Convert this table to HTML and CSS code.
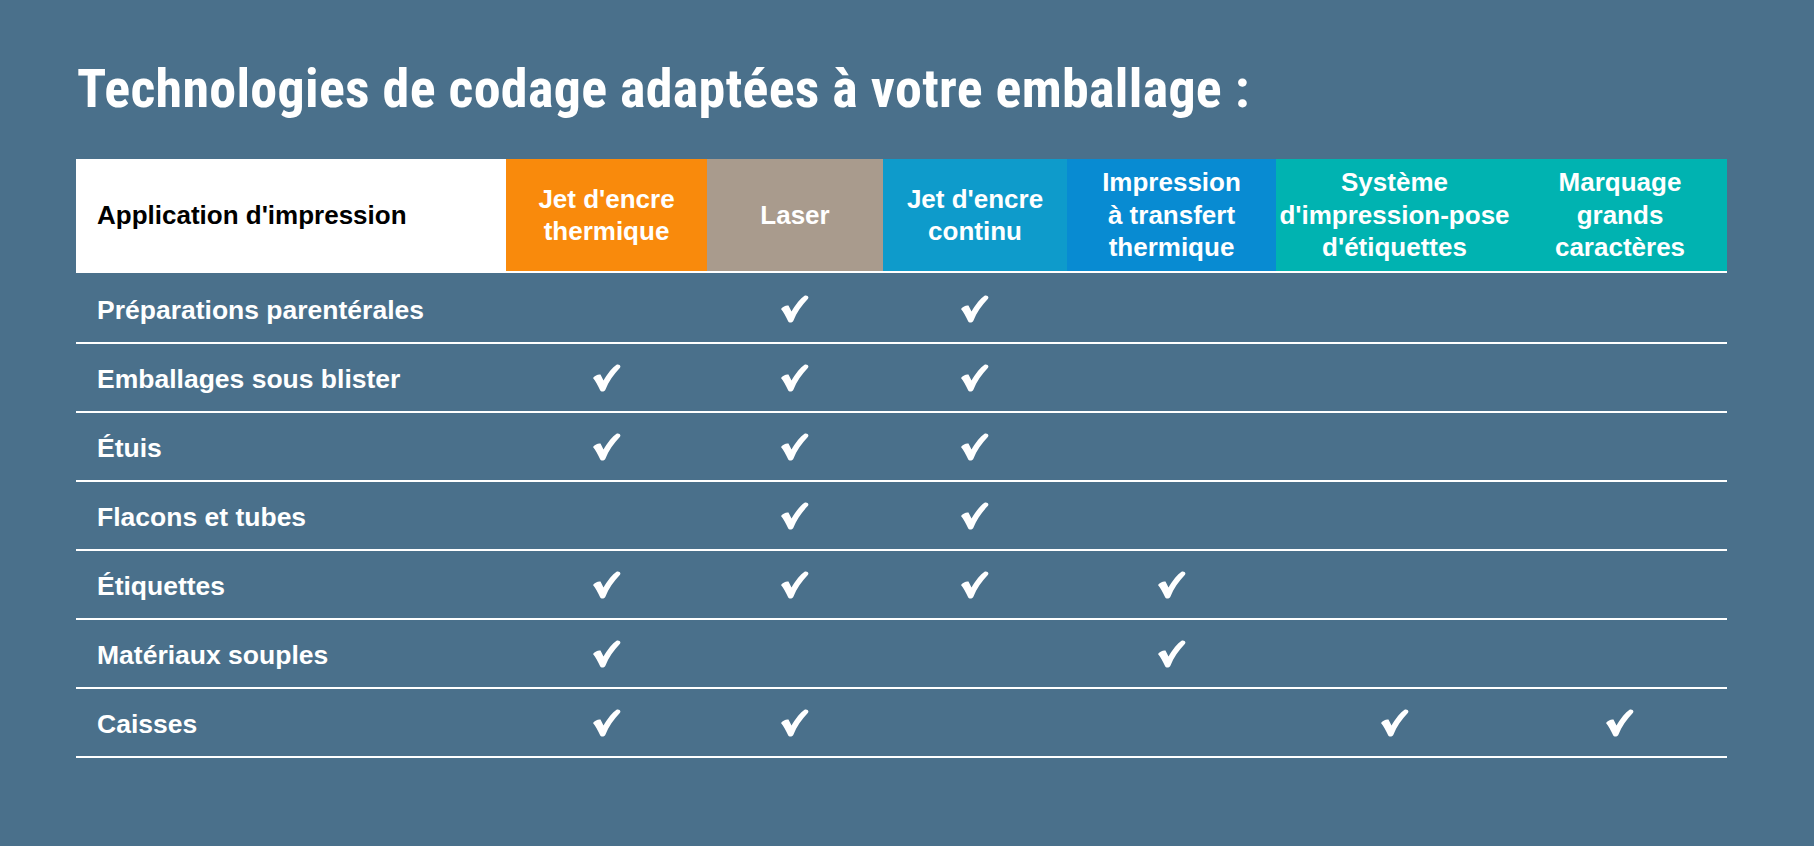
FILE: index.html
```html
<!DOCTYPE html>
<html lang="fr">
<head>
<meta charset="utf-8">
<title>Technologies de codage</title>
<link rel="stylesheet" href="styles.css">
</head>
<body>
<main class="page">
  <h1 class="title">Technologies de codage adaptées à votre emballage :</h1>
  <div class="grid">
    <div class="hcell hfirst">Application d'impression</div>
    <div class="hcell c-orange">Jet d'encre<br>thermique</div>
    <div class="hcell c-laser">Laser</div>
    <div class="hcell c-cij">Jet d'encre<br>continu</div>
    <div class="hcell c-tto">Impression<br>à transfert<br>thermique</div>
    <div class="hcell c-teal">Système<br>d'impression-pose<br>d'étiquettes</div>
    <div class="hcell c-teal">Marquage<br>grands<br>caractères</div>

    <div class="cell label">Préparations parentérales</div>
    <div class="cell"></div>
    <div class="cell"><svg class="chk" viewBox="0 0 28 28"><path d="M0 14 C2 11.5 5 10 7.5 10.5 L10.5 16.5 C15 9 19.5 3.5 23.5 0.8 C25.5 -0.3 28.5 1.5 27 3.8 C20.5 10.5 15.5 18 12.5 25.5 C11.5 28 8 28.3 7 26 C5 21.5 2.5 17 0 14 Z"/></svg></div>
    <div class="cell"><svg class="chk" viewBox="0 0 28 28"><path d="M0 14 C2 11.5 5 10 7.5 10.5 L10.5 16.5 C15 9 19.5 3.5 23.5 0.8 C25.5 -0.3 28.5 1.5 27 3.8 C20.5 10.5 15.5 18 12.5 25.5 C11.5 28 8 28.3 7 26 C5 21.5 2.5 17 0 14 Z"/></svg></div>
    <div class="cell"></div>
    <div class="cell"></div>
    <div class="cell"></div>

    <div class="cell label">Emballages sous blister</div>
    <div class="cell"><svg class="chk" viewBox="0 0 28 28"><path d="M0 14 C2 11.5 5 10 7.5 10.5 L10.5 16.5 C15 9 19.5 3.5 23.5 0.8 C25.5 -0.3 28.5 1.5 27 3.8 C20.5 10.5 15.5 18 12.5 25.5 C11.5 28 8 28.3 7 26 C5 21.5 2.5 17 0 14 Z"/></svg></div>
    <div class="cell"><svg class="chk" viewBox="0 0 28 28"><path d="M0 14 C2 11.5 5 10 7.5 10.5 L10.5 16.5 C15 9 19.5 3.5 23.5 0.8 C25.5 -0.3 28.5 1.5 27 3.8 C20.5 10.5 15.5 18 12.5 25.5 C11.5 28 8 28.3 7 26 C5 21.5 2.5 17 0 14 Z"/></svg></div>
    <div class="cell"><svg class="chk" viewBox="0 0 28 28"><path d="M0 14 C2 11.5 5 10 7.5 10.5 L10.5 16.5 C15 9 19.5 3.5 23.5 0.8 C25.5 -0.3 28.5 1.5 27 3.8 C20.5 10.5 15.5 18 12.5 25.5 C11.5 28 8 28.3 7 26 C5 21.5 2.5 17 0 14 Z"/></svg></div>
    <div class="cell"></div>
    <div class="cell"></div>
    <div class="cell"></div>

    <div class="cell label">Étuis</div>
    <div class="cell"><svg class="chk" viewBox="0 0 28 28"><path d="M0 14 C2 11.5 5 10 7.5 10.5 L10.5 16.5 C15 9 19.5 3.5 23.5 0.8 C25.5 -0.3 28.5 1.5 27 3.8 C20.5 10.5 15.5 18 12.5 25.5 C11.5 28 8 28.3 7 26 C5 21.5 2.5 17 0 14 Z"/></svg></div>
    <div class="cell"><svg class="chk" viewBox="0 0 28 28"><path d="M0 14 C2 11.5 5 10 7.5 10.5 L10.5 16.5 C15 9 19.5 3.5 23.5 0.8 C25.5 -0.3 28.5 1.5 27 3.8 C20.5 10.5 15.5 18 12.5 25.5 C11.5 28 8 28.3 7 26 C5 21.5 2.5 17 0 14 Z"/></svg></div>
    <div class="cell"><svg class="chk" viewBox="0 0 28 28"><path d="M0 14 C2 11.5 5 10 7.5 10.5 L10.5 16.5 C15 9 19.5 3.5 23.5 0.8 C25.5 -0.3 28.5 1.5 27 3.8 C20.5 10.5 15.5 18 12.5 25.5 C11.5 28 8 28.3 7 26 C5 21.5 2.5 17 0 14 Z"/></svg></div>
    <div class="cell"></div>
    <div class="cell"></div>
    <div class="cell"></div>

    <div class="cell label">Flacons et tubes</div>
    <div class="cell"></div>
    <div class="cell"><svg class="chk" viewBox="0 0 28 28"><path d="M0 14 C2 11.5 5 10 7.5 10.5 L10.5 16.5 C15 9 19.5 3.5 23.5 0.8 C25.5 -0.3 28.5 1.5 27 3.8 C20.5 10.5 15.5 18 12.5 25.5 C11.5 28 8 28.3 7 26 C5 21.5 2.5 17 0 14 Z"/></svg></div>
    <div class="cell"><svg class="chk" viewBox="0 0 28 28"><path d="M0 14 C2 11.5 5 10 7.5 10.5 L10.5 16.5 C15 9 19.5 3.5 23.5 0.8 C25.5 -0.3 28.5 1.5 27 3.8 C20.5 10.5 15.5 18 12.5 25.5 C11.5 28 8 28.3 7 26 C5 21.5 2.5 17 0 14 Z"/></svg></div>
    <div class="cell"></div>
    <div class="cell"></div>
    <div class="cell"></div>

    <div class="cell label">Étiquettes</div>
    <div class="cell"><svg class="chk" viewBox="0 0 28 28"><path d="M0 14 C2 11.5 5 10 7.5 10.5 L10.5 16.5 C15 9 19.5 3.5 23.5 0.8 C25.5 -0.3 28.5 1.5 27 3.8 C20.5 10.5 15.5 18 12.5 25.5 C11.5 28 8 28.3 7 26 C5 21.5 2.5 17 0 14 Z"/></svg></div>
    <div class="cell"><svg class="chk" viewBox="0 0 28 28"><path d="M0 14 C2 11.5 5 10 7.5 10.5 L10.5 16.5 C15 9 19.5 3.5 23.5 0.8 C25.5 -0.3 28.5 1.5 27 3.8 C20.5 10.5 15.5 18 12.5 25.5 C11.5 28 8 28.3 7 26 C5 21.5 2.5 17 0 14 Z"/></svg></div>
    <div class="cell"><svg class="chk" viewBox="0 0 28 28"><path d="M0 14 C2 11.5 5 10 7.5 10.5 L10.5 16.5 C15 9 19.5 3.5 23.5 0.8 C25.5 -0.3 28.5 1.5 27 3.8 C20.5 10.5 15.5 18 12.5 25.5 C11.5 28 8 28.3 7 26 C5 21.5 2.5 17 0 14 Z"/></svg></div>
    <div class="cell"><svg class="chk" viewBox="0 0 28 28"><path d="M0 14 C2 11.5 5 10 7.5 10.5 L10.5 16.5 C15 9 19.5 3.5 23.5 0.8 C25.5 -0.3 28.5 1.5 27 3.8 C20.5 10.5 15.5 18 12.5 25.5 C11.5 28 8 28.3 7 26 C5 21.5 2.5 17 0 14 Z"/></svg></div>
    <div class="cell"></div>
    <div class="cell"></div>

    <div class="cell label">Matériaux souples</div>
    <div class="cell"><svg class="chk" viewBox="0 0 28 28"><path d="M0 14 C2 11.5 5 10 7.5 10.5 L10.5 16.5 C15 9 19.5 3.5 23.5 0.8 C25.5 -0.3 28.5 1.5 27 3.8 C20.5 10.5 15.5 18 12.5 25.5 C11.5 28 8 28.3 7 26 C5 21.5 2.5 17 0 14 Z"/></svg></div>
    <div class="cell"></div>
    <div class="cell"></div>
    <div class="cell"><svg class="chk" viewBox="0 0 28 28"><path d="M0 14 C2 11.5 5 10 7.5 10.5 L10.5 16.5 C15 9 19.5 3.5 23.5 0.8 C25.5 -0.3 28.5 1.5 27 3.8 C20.5 10.5 15.5 18 12.5 25.5 C11.5 28 8 28.3 7 26 C5 21.5 2.5 17 0 14 Z"/></svg></div>
    <div class="cell"></div>
    <div class="cell"></div>

    <div class="cell label">Caisses</div>
    <div class="cell"><svg class="chk" viewBox="0 0 28 28"><path d="M0 14 C2 11.5 5 10 7.5 10.5 L10.5 16.5 C15 9 19.5 3.5 23.5 0.8 C25.5 -0.3 28.5 1.5 27 3.8 C20.5 10.5 15.5 18 12.5 25.5 C11.5 28 8 28.3 7 26 C5 21.5 2.5 17 0 14 Z"/></svg></div>
    <div class="cell"><svg class="chk" viewBox="0 0 28 28"><path d="M0 14 C2 11.5 5 10 7.5 10.5 L10.5 16.5 C15 9 19.5 3.5 23.5 0.8 C25.5 -0.3 28.5 1.5 27 3.8 C20.5 10.5 15.5 18 12.5 25.5 C11.5 28 8 28.3 7 26 C5 21.5 2.5 17 0 14 Z"/></svg></div>
    <div class="cell"></div>
    <div class="cell"></div>
    <div class="cell"><svg class="chk" viewBox="0 0 28 28"><path d="M0 14 C2 11.5 5 10 7.5 10.5 L10.5 16.5 C15 9 19.5 3.5 23.5 0.8 C25.5 -0.3 28.5 1.5 27 3.8 C20.5 10.5 15.5 18 12.5 25.5 C11.5 28 8 28.3 7 26 C5 21.5 2.5 17 0 14 Z"/></svg></div>
    <div class="cell"><svg class="chk" viewBox="0 0 28 28"><path d="M0 14 C2 11.5 5 10 7.5 10.5 L10.5 16.5 C15 9 19.5 3.5 23.5 0.8 C25.5 -0.3 28.5 1.5 27 3.8 C20.5 10.5 15.5 18 12.5 25.5 C11.5 28 8 28.3 7 26 C5 21.5 2.5 17 0 14 Z"/></svg></div>
  </div>
</main>
</body>
</html>
```

FILE: styles.css
```css
html, body {
  margin: 0;
  padding: 0;
}
body {
  background: #4a708b;
  width: 1814px;
  height: 846px;
  overflow: hidden;
  font-family: "Liberation Sans", Arial, sans-serif;
  font-weight: bold;
  color: #fff;
}
.page {
  padding: 57px 0 0 76px;
}
.title {
  margin: 0 0 0 1px;
  font-family: "Roboto", "Liberation Sans", sans-serif;
  font-size: 54px;
  line-height: 64px;
  font-weight: bold;
  font-stretch: 75%;
  letter-spacing: 0.3px;
  color: #fff;
  white-space: nowrap;
}
.grid {
  margin-top: 38px;
  display: grid;
  grid-template-columns: 430px 201px 176px 184px 209px 237px 214px;
  width: 1651px;
}
.hcell {
  box-sizing: border-box;
  height: 114px;
  margin-bottom: 2px;
  border-bottom: 2px solid #fff;
  display: flex;
  align-items: center;
  justify-content: center;
  text-align: center;
  font-size: 26px;
  line-height: 32.5px;
  color: #fff;
  white-space: nowrap;
}
.hfirst {
  background: #fff;
  color: #000;
  justify-content: flex-start;
  padding-left: 21px;
  text-align: left;
}
.c-orange { background: #f98a0c; }
.c-laser { background: #a99b8d; }
.c-cij { background: #0e9bcb; }
.c-tto { background: #088bd2; }
.c-teal { background: #00b3b1; }
.cell {
  box-sizing: border-box;
  height: 69px;
  border-bottom: 2px solid #fff;
  display: flex;
  align-items: center;
  justify-content: center;
}
.label {
  justify-content: flex-start;
  padding: 3px 0 0 21px;
  font-size: 26.5px;
  color: #fff;
}
.chk {
  width: 28px;
  height: 28px;
  fill: #fff;
}
```
